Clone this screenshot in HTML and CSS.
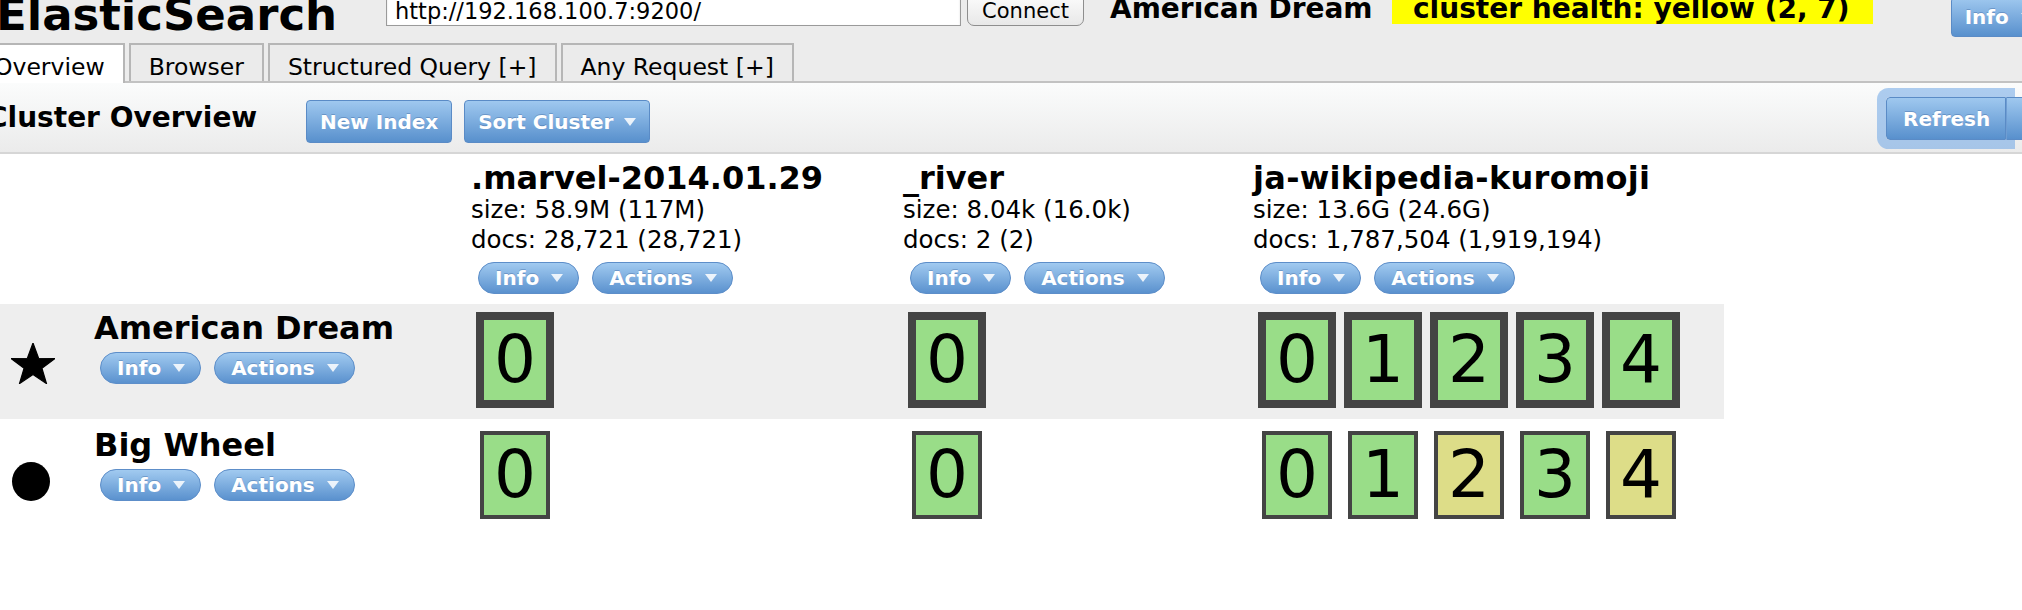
FILE: index.html
```html
<!DOCTYPE html>
<html>
<head>
<meta charset="utf-8">
<title>ElasticSearch Head</title>
<link rel="stylesheet" href="styles.css">
</head>
<body>
<div class="app">
  <header class="topbar">
    <h1 class="logo">ElasticSearch</h1>
    <input class="url" type="text" value="http://192.168.100.7:9200/">
    <button class="connect">Connect</button>
    <span class="cluster-name">American Dream</span>
    <span class="health">cluster health: yellow (2, 7)</span>
    <button class="btn btn-top">Info <span class="caret"></span></button>
  </header>

  <nav class="tabs">
    <div class="tab active">Overview</div>
    <div class="tab">Browser</div>
    <div class="tab">Structured Query [+]</div>
    <div class="tab">Any Request [+]</div>
  </nav>

  <div class="toolbar">
    <h2 class="title">Cluster Overview</h2>
    <button class="btn">New Index</button>
    <button class="btn btn-sort">Sort Cluster <span class="caret"></span></button>
    <div class="refresh-group">
      <button class="btn btn-refresh">Refresh</button>
      <button class="btn btn-split"><span class="caret"></span></button>
    </div>
  </div>

  <table class="overview">
    <colgroup>
      <col class="c0"><col class="c1"><col class="c2"><col class="c3">
    </colgroup>
    <thead>
      <tr>
        <th></th>
        <th class="index-head">
          <div class="idx-name">.marvel-2014.01.29</div>
          <div class="idx-stat">size: 58.9M (117M)</div>
          <div class="idx-stat">docs: 28,721 (28,721)</div>
          <div class="pills pills-idx">
            <button class="pill">Info <span class="caret"></span></button>
            <button class="pill">Actions <span class="caret"></span></button>
          </div>
        </th>
        <th class="index-head">
          <div class="idx-name">_river</div>
          <div class="idx-stat">size: 8.04k (16.0k)</div>
          <div class="idx-stat">docs: 2 (2)</div>
          <div class="pills pills-idx">
            <button class="pill">Info <span class="caret"></span></button>
            <button class="pill">Actions <span class="caret"></span></button>
          </div>
        </th>
        <th class="index-head">
          <div class="idx-name idx-name-wide">ja-wikipedia-kuromoji</div>
          <div class="idx-stat">size: 13.6G (24.6G)</div>
          <div class="idx-stat">docs: 1,787,504 (1,919,194)</div>
          <div class="pills pills-idx">
            <button class="pill">Info <span class="caret"></span></button>
            <button class="pill">Actions <span class="caret"></span></button>
          </div>
        </th>
      </tr>
    </thead>
    <tbody>
      <tr class="row master">
        <td class="node-cell">
          <div class="node">
            <span class="node-icon">
              <svg class="star" width="44" height="41" viewBox="0 0 44 42" preserveAspectRatio="none"><polygon points="22,0 27.6,15.6 43.87,15.89 30.9,25.9 35.52,41.61 22,32.3 8.48,41.61 13.1,25.9 0.13,15.89 16.4,15.6" fill="#000" stroke="#000" stroke-width="1.2" stroke-linejoin="round"/></svg>
            </span>
            <div class="node-body">
              <div class="node-name">American Dream</div>
              <div class="pills">
                <button class="pill">Info <span class="caret"></span></button>
                <button class="pill">Actions <span class="caret"></span></button>
              </div>
            </div>
          </div>
        </td>
        <td><div class="shards"><div class="shard primary">0</div></div></td>
        <td><div class="shards"><div class="shard primary">0</div></div></td>
        <td><div class="shards">
          <div class="shard primary">0</div>
          <div class="shard primary">1</div>
          <div class="shard primary">2</div>
          <div class="shard primary">3</div>
          <div class="shard primary">4</div>
        </div></td>
      </tr>
      <tr class="row">
        <td class="node-cell node-cell-2">
          <div class="node">
            <span class="node-icon">
              <svg class="dot" width="38" height="39" viewBox="0 0 38 39"><ellipse cx="19" cy="19.5" rx="19" ry="19.5" fill="#000"/></svg>
            </span>
            <div class="node-body">
              <div class="node-name">Big Wheel</div>
              <div class="pills">
                <button class="pill">Info <span class="caret"></span></button>
                <button class="pill">Actions <span class="caret"></span></button>
              </div>
            </div>
          </div>
        </td>
        <td><div class="shards"><div class="shard">0</div></div></td>
        <td><div class="shards"><div class="shard">0</div></div></td>
        <td><div class="shards">
          <div class="shard">0</div>
          <div class="shard">1</div>
          <div class="shard yellow">2</div>
          <div class="shard">3</div>
          <div class="shard yellow">4</div>
        </div></td>
      </tr>
    </tbody>
  </table>
</div>
</body>
</html>
```

FILE: styles.css
```css
* { box-sizing: border-box; }

html, body {
  margin: 0;
  padding: 0;
}

body {
  width: 2022px;
  height: 610px;
  overflow: hidden;
  background: #ffffff;
  color: #000;
  font-family: "DejaVu Sans", Verdana, sans-serif;
}

.app { width: 2022px; }

/* ---------- top bar ---------- */
.topbar {
  display: flex;
  align-items: flex-start;
  height: 43px;
  background: #ececec;
}
.topbar > * { flex: none; }

.logo {
  margin: -7px 0 0 -4px;
  width: 390px;
  font-size: 45px;
  line-height: 44px;
  font-weight: bold;
  white-space: nowrap;
}

.url {
  width: 575px;
  height: 36px;
  margin-top: -10px;
  padding: 6px 8px 0;
  border: 1px solid #9a9a9a;
  background: #fff;
  box-shadow: inset 0 1px 2px rgba(0,0,0,.15);
  font: 22.5px "DejaVu Sans", sans-serif;
  color: #000;
  outline: none;
}

.connect {
  margin: -10px 0 0 6px;
  width: 117px;
  height: 36px;
  padding: 6px 0 0;
  border: 1px solid #8e8e8e;
  border-radius: 7px;
  background: linear-gradient(#ffffff, #e8e8e8);
  font: 21px "DejaVu Sans", sans-serif;
  color: #000;
}

.cluster-name {
  margin: -5px 0 0 26px;
  width: 282px;
  font-size: 28px;
  line-height: 28px;
  font-weight: bold;
  white-space: nowrap;
}

.health {
  margin-top: -5px;
  padding: 0 23px 1px 21px;
  background: #ffff00;
  font-size: 28px;
  line-height: 28px;
  font-weight: bold;
  white-space: nowrap;
}

/* ---------- buttons ---------- */
.btn {
  display: inline-flex;
  align-items: center;
  flex: none;
  height: 43px;
  padding: 0 13px;
  border: 1px solid #5a8bc6;
  border-radius: 4px;
  background: linear-gradient(#9fc8ef, #5890cd);
  color: #fff;
  font: bold 20px "DejaVu Sans", sans-serif;
  text-shadow: 0 -1px 0 rgba(30,70,130,.3);
  white-space: nowrap;
}

.caret {
  display: inline-block;
  width: 0;
  height: 0;
  margin-left: 12px;
  border-left: 6.5px solid transparent;
  border-right: 6.5px solid transparent;
  border-top: 8px solid rgba(255,255,255,.85);
}

.btn-top {
  margin: -3px 0 0 78px;
  height: 40px;
}

/* ---------- tabs ---------- */
.tabs {
  display: flex;
  align-items: flex-start;
  gap: 4px;
  height: 40px;
  margin-left: -26px;
  background: #ececec;
  border-bottom: 2px solid #c2c2c2;
}

.tab {
  flex: none;
  height: 38px;
  padding: 7px 18px 0;
  border: 2px solid #b6b6b6;
  border-bottom: none;
  background: #ebebeb;
  font-size: 23.5px;
  line-height: 30px;
  white-space: nowrap;
}

.tab.active {
  height: 40px;
  margin-bottom: -2px;
  background: #ffffff;
}

/* ---------- toolbar ---------- */
.toolbar {
  display: flex;
  align-items: flex-start;
  height: 71px;
  background: linear-gradient(#fbfcfc, #ebebeb);
  border-bottom: 2px solid #d6d6d6;
}

.title {
  flex: none;
  width: 319px;
  margin: 21px 0 0 -13px;
  font-size: 28px;
  line-height: 28px;
  font-weight: bold;
  white-space: nowrap;
}

.toolbar > .btn { margin-top: 17px; }
.btn-sort { margin-left: 12px; }
.btn-sort .caret { margin-left: 11px; }

.refresh-group {
  display: flex;
  margin: 14px -24px 0 auto;
}

.btn-refresh {
  width: 120px;
  padding: 0 16px;
  border-radius: 4px 0 0 4px;
  box-shadow: 0 0 0 9px rgba(110,165,230,.55);
}

.btn-split {
  width: 40px;
  padding: 0 0 0 18px;
  border-left: 1px solid #6f9dd2;
  border-radius: 0 4px 4px 0;
}
.btn-split .caret { margin-left: 0; }

/* ---------- cluster table ---------- */
.overview {
  border-collapse: collapse;
  table-layout: fixed;
  width: 1724px;
}

.c0 { width: 471px; }
.c1 { width: 432px; }
.c2 { width: 350px; }
.c3 { width: 471px; }

.overview th,
.overview td {
  padding: 0;
  vertical-align: top;
  text-align: left;
  font-weight: normal;
}

.overview .index-head { padding: 7px 0 10px 0; }

.idx-name {
  font-size: 32px;
  line-height: 34px;
  font-weight: bold;
  white-space: nowrap;
}
.idx-name-wide { letter-spacing: 0.3px; }

.idx-stat {
  font-size: 24.5px;
  line-height: 30px;
  white-space: nowrap;
}

.pills {
  display: flex;
  gap: 13px;
  margin-top: 7px;
  padding-left: 6px;
}
.pills-idx { padding-left: 7px; }

.pill {
  display: inline-flex;
  align-items: center;
  flex: none;
  height: 32px;
  padding: 0 15px 0 16px;
  border: 1px solid #5d8ec9;
  border-radius: 16px;
  background: linear-gradient(#a1caf0, #5a91ce);
  color: #fff;
  font: bold 20px "DejaVu Sans", sans-serif;
  text-shadow: 0 -1px 0 rgba(30,70,130,.3);
  white-space: nowrap;
}

.row.master { background: #eeeeee; }

.overview .node-cell { padding: 7px 0 0 11px; }
.overview .node-cell-2 { padding-top: 9px; }

.node {
  display: flex;
  align-items: flex-end;
}

.node-icon {
  display: flex;
  flex: none;
  width: 44px;
  margin-right: 39px;
}
.node-icon .dot { margin-left: 1px; }
.node-icon svg { display: block; }

.node-name {
  font-size: 32px;
  line-height: 34px;
  font-weight: bold;
  white-space: nowrap;
}

.shards {
  display: flex;
  gap: 8px;
  padding: 8px 0 11px 5px;
}

.shard {
  flex: none;
  width: 70px;
  height: 88px;
  margin: 4px;
  border: 4px solid #444444;
  background: #99dd88;
  font-size: 66px;
  line-height: 80px;
  text-align: center;
}

.shard.primary {
  width: 78px;
  height: 96px;
  margin: 0;
  border-width: 8px;
}

.shard.yellow { background: #dddd88; }
```
